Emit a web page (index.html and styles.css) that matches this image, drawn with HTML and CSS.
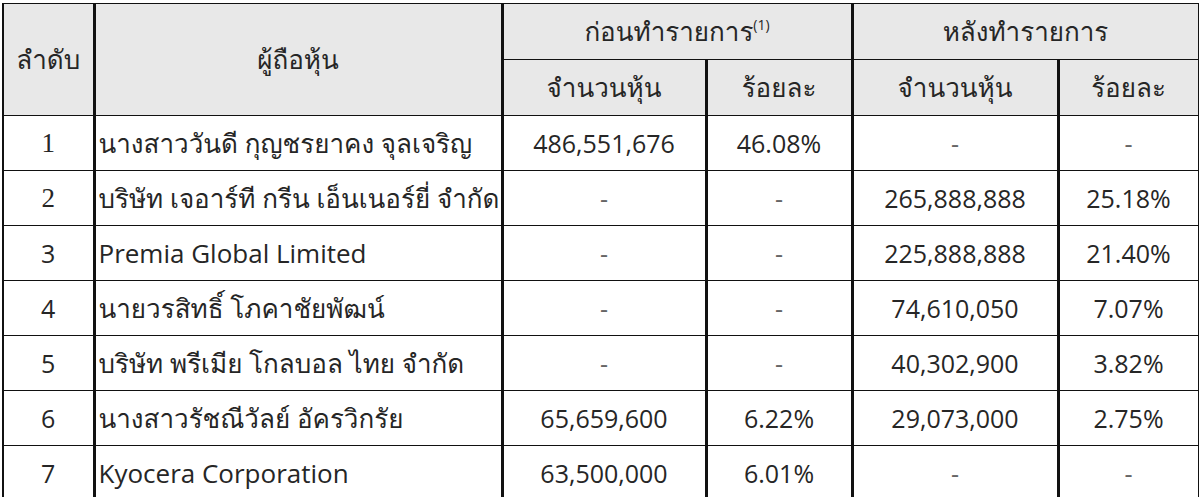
FILE: index.html
```html
<!DOCTYPE html>
<html lang="th">
<head>
<meta charset="utf-8">
<link rel="stylesheet" href="styles.css">
</head>
<body>
<table class="holders">
  <colgroup>
    <col class="c-no">
    <col class="c-name">
    <col class="c-qty1">
    <col class="c-pct1">
    <col class="c-qty2">
    <col class="c-pct2">
  </colgroup>
  <thead>
    <tr class="h1">
      <th rowspan="2">ลำดับ</th>
      <th rowspan="2">ผู้ถือหุ้น</th>
      <th colspan="2">ก่อนทำรายการ<sup>(1)</sup></th>
      <th colspan="2">หลังทำรายการ</th>
    </tr>
    <tr class="h2">
      <th>จำนวนหุ้น</th>
      <th>ร้อยละ</th>
      <th>จำนวนหุ้น</th>
      <th>ร้อยละ</th>
    </tr>
  </thead>
  <tbody>
    <tr>
      <td class="no serif">1</td>
      <td class="name">นางสาววันดี กุญชรยาคง จุลเจริญ</td>
      <td>486,551,676</td>
      <td>46.08%</td>
      <td class="dash">-</td>
      <td class="dash">-</td>
    </tr>
    <tr>
      <td class="no serif">2</td>
      <td class="name">บริษัท เจอาร์ที กรีน เอ็นเนอร์ยี่ จำกัด</td>
      <td class="dash">-</td>
      <td class="dash">-</td>
      <td>265,888,888</td>
      <td>25.18%</td>
    </tr>
    <tr>
      <td class="no">3</td>
      <td class="name">Premia Global Limited</td>
      <td class="dash">-</td>
      <td class="dash">-</td>
      <td>225,888,888</td>
      <td>21.40%</td>
    </tr>
    <tr>
      <td class="no">4</td>
      <td class="name">นายวรสิทธิ์ โภคาชัยพัฒน์</td>
      <td class="dash">-</td>
      <td class="dash">-</td>
      <td>74,610,050</td>
      <td>7.07%</td>
    </tr>
    <tr>
      <td class="no">5</td>
      <td class="name">บริษัท พรีเมีย โกลบอล ไทย จำกัด</td>
      <td class="dash">-</td>
      <td class="dash">-</td>
      <td>40,302,900</td>
      <td>3.82%</td>
    </tr>
    <tr>
      <td class="no">6</td>
      <td class="name">นางสาวรัชณีวัลย์ อัครวิกรัย</td>
      <td>65,659,600</td>
      <td>6.22%</td>
      <td>29,073,000</td>
      <td>2.75%</td>
    </tr>
    <tr>
      <td class="no">7</td>
      <td class="name">Kyocera Corporation</td>
      <td>63,500,000</td>
      <td>6.01%</td>
      <td class="dash">-</td>
      <td class="dash">-</td>
    </tr>
  </tbody>
</table>
</body>
</html>
```

FILE: styles.css
```css
html, body {
  margin: 0;
  padding: 0;
  background: #ffffff;
}

body {
  padding: 3px 0 0 2px;
}

.holders {
  border-collapse: collapse;
  table-layout: fixed;
  width: 1195px;
  font-family: "Open Sans", Tahoma, "Loma", "Garuda", "Noto Sans Thai", "Noto Sans", sans-serif;
  font-size: 25px;
  font-weight: normal;
  color: #262626;
}

.c-no { width: 91px; }
.c-name { width: 408px; }
.c-qty1 { width: 204px; }
.c-pct1 { width: 146px; }
.c-qty2 { width: 206px; }
.c-pct2 { width: 140px; }

.holders th,
.holders td {
  border-top: 1px solid #111;
  border-bottom: 1px solid #111;
  border-left: 3px solid #111;
  border-right: 3px solid #111;
  padding: 0;
  text-align: center;
  white-space: nowrap;
  overflow: hidden;
}

.holders th {
  background: #e8e8e8;
  font-weight: normal;
  font-size: 26px;
}

.holders tr:first-child th:first-child,
.holders td:first-child {
  border-left-width: 2px;
}

.holders th:last-child,
.holders td:last-child {
  border-right-width: 1px;
}

.h1 th { height: 55px; }
.h2 th { height: 55px; }

.holders tbody td { height: 54px; }

.holders td.name {
  text-align: left;
  padding-left: 3px;
  font-size: 26px;
}

.holders td.serif {
  font-family: "Liberation Serif", serif;
  font-size: 27px;
}

.holders td.dash {
  color: #666;
}

sup {
  font-size: 14px;
  vertical-align: 11px;
  line-height: 0;
}
```
